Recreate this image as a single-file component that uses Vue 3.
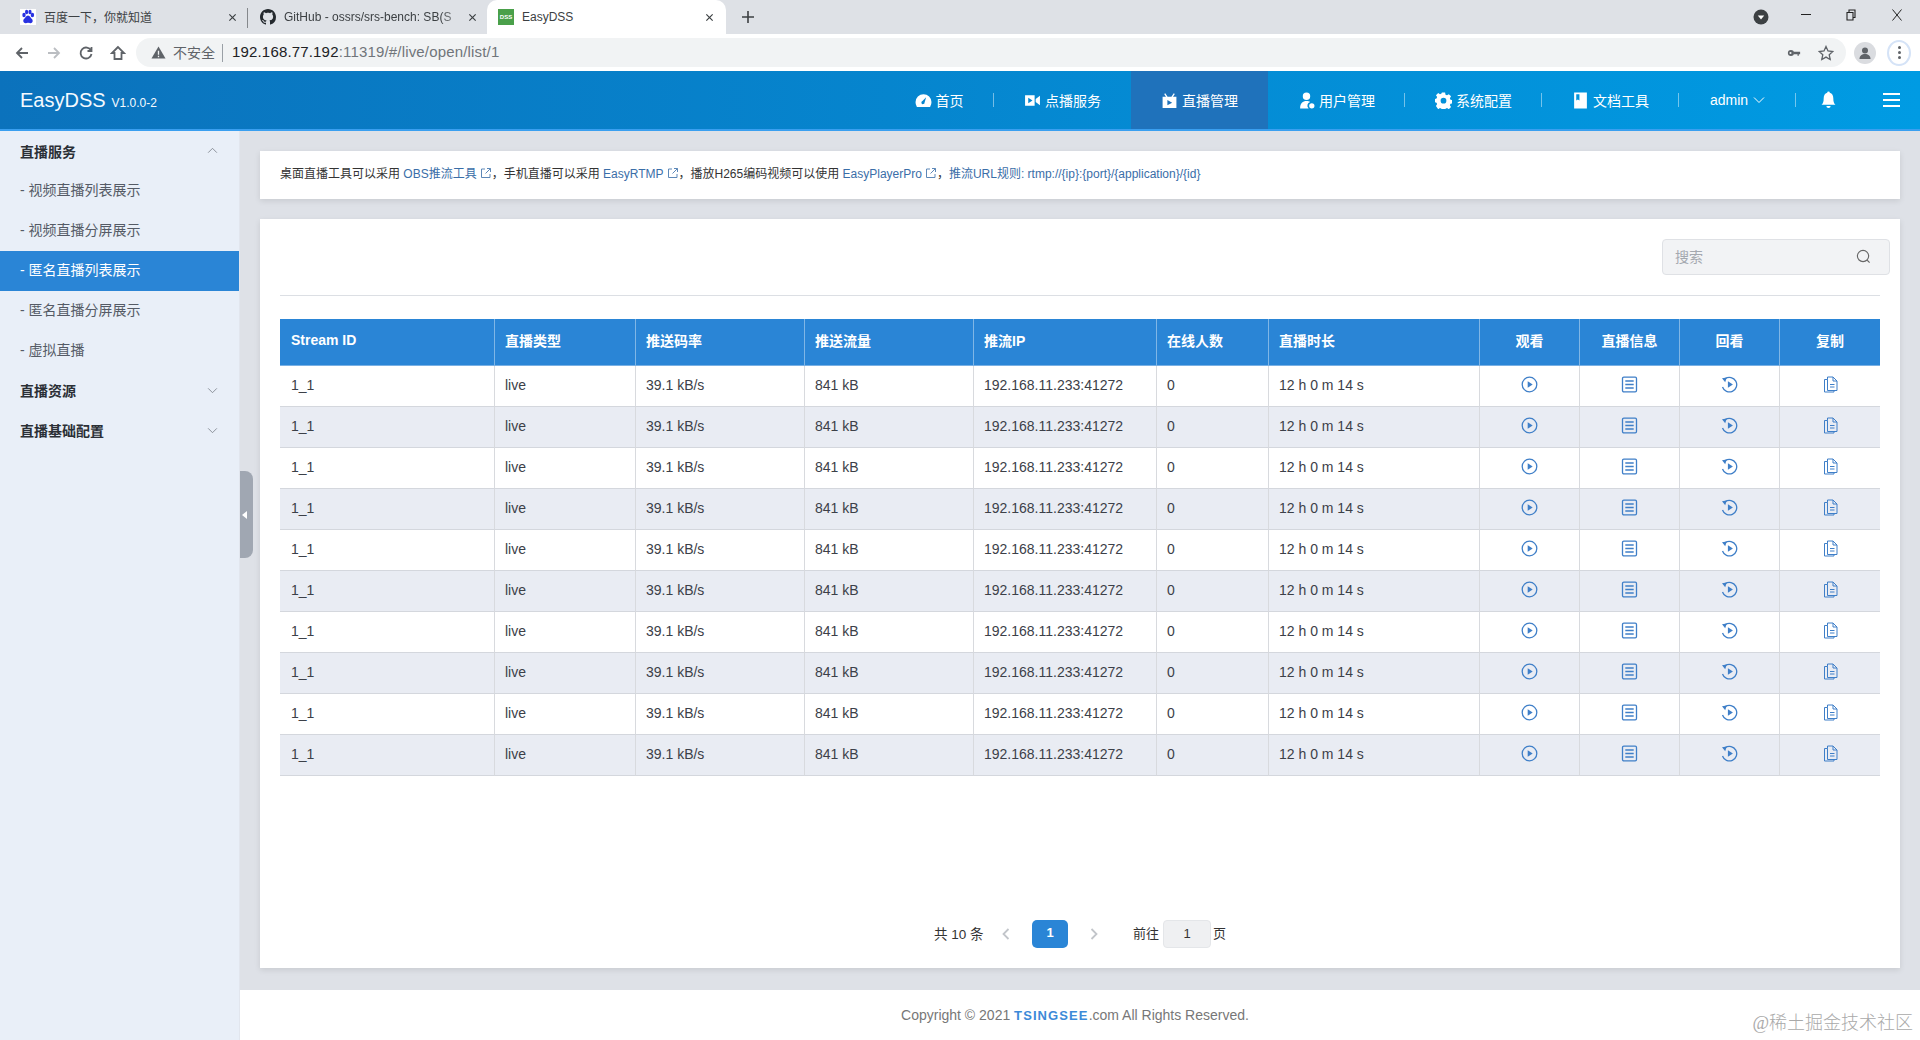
<script setup>
const navItems = [
  { label: '首页', icon: 'gauge', cls: 'first' },
  { label: '点播服务', icon: 'video' },
  { label: '直播管理', icon: 'tv', active: true },
  { label: '用户管理', icon: 'user' },
  { label: '系统配置', icon: 'gear' },
  { label: '文档工具', icon: 'book' }
]
const subs = ['视频直播列表展示', '视频直播分屏展示', '匿名直播列表展示', '匿名直播分屏展示', '虚拟直播']
const cols = [215, 141, 169, 169, 183, 112, 211, 100, 100, 100, 100]
const heads = ['Stream ID', '直播类型', '推送码率', '推送流量', '推流IP', '在线人数', '直播时长']
const actions = ['观看', '直播信息', '回看', '复制']
const rows = Array.from({ length: 10 }, (_, i) => i)
const cells = ['1_1', 'live', '39.1 kB/s', '841 kB', '192.168.11.233:41272', '0', '12 h 0 m 14 s']
</script>

<template>
  <div class="page">
    <div class="tabs">
      <div class="tab t1">
        <svg class="fav" viewBox="0 0 16 16"><rect width="16" height="16" fill="#fff"/><g fill="#2932e1"><ellipse cx="4" cy="6" rx="1.7" ry="2.2"/><ellipse cx="6.6" cy="3" rx="1.6" ry="2.2"/><ellipse cx="10" cy="3" rx="1.6" ry="2.2"/><ellipse cx="12.4" cy="6" rx="1.7" ry="2.2"/><path d="M8 6.500c-2 0-2.500 2.300-4 3.500-1.500 1.500-.5 4.500 2 4.200 1-.1 1.300-.4 2-.4s1.200.4 2.200.4c2.500.2 3.200-2.700 1.700-4.200-1.400-1.200-1.900-3.500-3.900-3.500z"/></g></svg>
        <span class="tab-text w1">百度一下，你就知道</span>
        <svg class="x" viewBox="0 0 10 10"><path d="M1.500 1.500l7 7M8.500 1.500l-7 7"/></svg>
      </div>
      <div class="tab t2">
        <svg class="fav" viewBox="0 0 16 16"><path fill="#24292e" d="M8 0C3.580 0 0 3.580 0 8c0 3.540 2.290 6.530 5.470 7.590.4.070.55-.17.55-.38 0-.19-.01-.82-.01-1.490-2.010.37-2.530-.49-2.690-.94-.09-.23-.48-.94-.82-1.130-.28-.15-.68-.52-.01-.53.630-.01 1.080.58 1.230.82.720 1.210 1.870.87 2.330.66.070-.52.280-.87.510-1.070-1.780-.2-3.640-.89-3.640-3.950 0-.87.310-1.590.820-2.150-.08-.2-.36-1.020.08-2.120 0 0 .67-.21 2.200.82.640-.18 1.320-.27 2-.27s1.360.09 2 .27c1.530-1.040 2.200-.82 2.200-.82.440 1.100.16 1.920.08 2.120.51.560.82 1.270.82 2.150 0 3.070-1.870 3.750-3.650 3.950.29.250.54.730.54 1.480 0 1.070-.01 1.930-.01 2.200 0 .210.15.460.55.380A8.010 8.010 0 0 0 16 8c0-4.420-3.580-8-8-8z"/></svg>
        <span class="tab-text w2">GitHub - ossrs/srs-bench: SB(S</span>
        <svg class="x" viewBox="0 0 10 10"><path d="M1.500 1.500l7 7M8.500 1.500l-7 7"/></svg>
      </div>
      <div class="tab t3">
        <span class="dss">DSS</span>
        <span class="tab-text w3">EasyDSS</span>
        <svg class="x" viewBox="0 0 10 10"><path d="M1.500 1.500l7 7M8.500 1.500l-7 7"/></svg>
      </div>
      <svg class="plus" viewBox="0 0 12 12"><path d="M6 0v12M0 6h12"/></svg>
      <div class="win">
        <svg class="w-ic" viewBox="0 0 16 16"><circle cx="8" cy="8" r="7.500" fill="#3c4043"/><path d="M4.800 6.500h6.400L8 10.500z" fill="#fff"/></svg>
        <span class="w-min"></span>
        <svg class="w-res" viewBox="0 0 10 12"><path d="M1 3.500h6v7.500H1zM3 3.500V1h6v7.500H7" fill="none" stroke="#222" stroke-width="1.100"/></svg>
        <svg class="w-cl" viewBox="0 0 12 12"><path d="M1.500 .5l9 11M10.500 .5l-9 11" stroke="#222" fill="none"/></svg>
      </div>
    </div>

    <div class="addr">
      <svg class="ctl" viewBox="0 0 16 16"><path d="M14 8H3M8 3L3 8l5 5" class="s-dark"/></svg>
      <svg class="ctl" viewBox="0 0 16 16"><path d="M2 8h11M8 3l5 5-5 5" class="s-light"/></svg>
      <svg class="ctl" viewBox="0 0 16 16"><path d="M13 5.500A5.500 5.500 0 1 0 13.500 9M13.500 2v4h-4" class="s-dark"/></svg>
      <svg class="ctl" viewBox="0 0 16 16"><path d="M8 2L2 8h2.500v6h7V8H14z" class="s-dark"/></svg>
      <div class="pill">
        <svg class="warn" viewBox="0 0 16 16"><path d="M8 1.500L15.500 14.500H.5z" fill="#5f6368"/><path d="M7.300 6h1.400v4.500H7.300zM7.300 11.500h1.400V13H7.300z" fill="#f1f3f4"/></svg>
        <span class="insecure">不安全</span>
        <span class="vbar"></span>
        <span class="url"><b>192.168.77.192</b>:11319/#/live/open/list/1</span>
        <svg class="key" viewBox="0 0 16 16"><circle cx="4.500" cy="8" r="3.500" fill="#5f6368"/><circle cx="4" cy="8" r="1.200" fill="#f1f3f4"/><path d="M7.500 6.500H15v3h-1.500v1.500H12V9.500H7.500z" fill="#5f6368"/></svg>
        <svg class="star" viewBox="0 0 16 16"><path d="M8 1.500l2 4.500 4.800.5-3.600 3.200 1 4.800L8 12.100l-4.200 2.400 1-4.800L1.200 6.500 6 6z" fill="none" stroke="#5f6368" stroke-width="1.300"/></svg>
      </div>
      <span class="prof"><svg viewBox="0 0 16 16"><circle cx="8" cy="5.500" r="3" fill="#5f6368"/><path d="M2.500 14c0-3.500 2.500-5 5.500-5s5.500 1.500 5.500 5z" fill="#5f6368"/></svg></span>
      <span class="dots"><i></i><i></i><i></i></span>
    </div>

    <header class="head">
      <div class="logo">EasyDSS<small>V1.0.0-2</small></div>
      <nav class="nav">
        <a v-for="n in navItems" :key="n.label" class="nav-item" :class="[n.cls, { on: n.active }]">
          <svg class="nav-ic" viewBox="0 0 16 16" fill="#fff">
            <path v-if="n.icon === 'gauge'" fill-rule="evenodd" d="M8 2a7.500 7.500 0 0 0-7.500 7.500c0 1.700.5 3 1.300 4.500h12.400c.8-1.500 1.300-2.800 1.300-4.500A7.500 7.500 0 0 0 8 2zM7 8.500L10.500 5 9 9.800a1.500 1.500 0 1 1-2-1.300z"/>
            <path v-else-if="n.icon === 'video'" fill-rule="evenodd" d="M1 3h9v10H1zM4 5.500v5L8 8zM11 6.500L15 3.500v9l-4-3z"/>
            <path v-else-if="n.icon === 'tv'" fill-rule="evenodd" d="M1.500 4.500h3.200L3 1.800l1-.6L6.200 4.500h3.600L12 1.200l1 .6-1.700 2.700h3.200V15h-13zM6 7.500v5L10.500 10z"/>
            <path v-else-if="n.icon === 'user'" fill-rule="evenodd" d="M8 .5a3.500 3.500 0 1 1 0 7 3.500 3.500 0 0 1 0-7zM2 15.500c0-5 2.500-7 6-7 1.500 0 2.500.3 3.400 1a3.500 3.500 0 0 0-1.400 6z M13 10.500a2.500 2.500 0 1 1 0 5 2.500 2.500 0 0 1 0-5z"/>
            <path v-else-if="n.icon === 'gear'" fill-rule="evenodd" d="M6.500.5h3l.4 2 1.400.6 1.700-1.100 2.100 2.100-1.100 1.700.6 1.400 2 .4v3l-2 .4-.6 1.400 1.100 1.700-2.100 2.100-1.700-1.100-1.400.6-.4 2h-3l-.4-2-1.400-.6-1.700 1.100L.9 13.100 2 11.400l-.6-1.400-2-.4v-3l2-.4L2 4.800.9 3.100 3 1l1.700 1.100 1.400-.6zM8 5.500a2.700 2.700 0 1 0 0 5.400 2.700 2.700 0 0 0 0-5.400z"/>
            <path v-else fill-rule="evenodd" d="M2 .5h12v15H2zM4 2v6l1.500-1L7 8V2z"/>
          </svg>
          <span>{{ n.label }}</span>
        </a>
        <a class="nav-item admin">
          admin
          <svg class="chev" viewBox="0 0 12 8"><path d="M1 1.500l5 5 5-5" fill="none" stroke="#fff"/></svg>
        </a>
        <a class="nav-item bell">
          <svg viewBox="0 0 14 16" fill="#fff"><path d="M7 0a1.200 1.200 0 0 1 1.200 1.300C10.500 2 11.500 4 11.500 6.500c0 3 .6 4.500 2 6H.5c1.400-1.500 2-3 2-6C2.500 4 3.500 2 5.800 1.300A1.200 1.200 0 0 1 7 0zM5 13.500h4a2 2 0 0 1-4 0z"/></svg>
        </a>
        <a class="burger"><i></i><i></i><i></i></a>
      </nav>
    </header>

    <div class="body">
      <aside class="side">
        <div class="grp first">直播服务<svg class="g-chev" viewBox="0 0 12 8"><path d="M1 6.500l5-5 5 5"/></svg></div>
        <div v-for="(s, i) in subs" :key="s" class="sub" :class="{ on: i === 2 }">- {{ s }}</div>
        <div class="grp">直播资源<svg class="g-chev" viewBox="0 0 12 8"><path d="M1 1.500l5 5 5-5"/></svg></div>
        <div class="grp">直播基础配置<svg class="g-chev" viewBox="0 0 12 8"><path d="M1 1.500l5 5 5-5"/></svg></div>
        <div class="handle"><span></span></div>
      </aside>
      <main class="main">
        <section class="card notice">
          桌面直播工具可以采用 <a>OBS推流工具</a><svg class="ext" viewBox="0 0 12 12"><path d="M5 2H1.500v8.500H10V7M7 1.500h3.500V5M10.500 1.500L5.500 6.500"/></svg>，手机直播可以采用 <a>EasyRTMP</a><svg class="ext" viewBox="0 0 12 12"><path d="M5 2H1.500v8.500H10V7M7 1.500h3.500V5M10.500 1.500L5.500 6.500"/></svg>，播放H265编码视频可以使用 <a>EasyPlayerPro</a><svg class="ext" viewBox="0 0 12 12"><path d="M5 2H1.500v8.500H10V7M7 1.500h3.500V5M10.500 1.500L5.500 6.500"/></svg>，<a>推流URL规则: rtmp://{ip}:{port}/{application}/{id}</a>
        </section>
        <section class="card panel">
          <div class="tools">
            <div class="search">
              <span>搜索</span>
              <svg viewBox="0 0 16 16"><circle cx="7.500" cy="7.500" r="6" fill="none" stroke="#666" stroke-width="1.200"/><path d="M12 12l2.500 2.500" stroke="#666" stroke-width="1.200"/></svg>
            </div>
          </div>
          <table class="tbl">
            <colgroup><col v-for="(c, i) in cols" :key="i" :style="{ width: c + 'px' }" /></colgroup>
            <thead>
              <tr>
                <th v-for="h in heads" :key="h">{{ h }}</th>
                <th v-for="a in actions" :key="a" class="c">{{ a }}</th>
              </tr>
            </thead>
            <tbody>
              <tr v-for="r in rows" :key="r">
                <td v-for="(c, i) in cells" :key="i">{{ c }}</td>
                <td class="c">
                  <svg class="ai" viewBox="0 0 17 17"><circle cx="8.500" cy="8.500" r="7.300" /><path class="fill" d="M6.700 5.300v6.400L11.700 8.500z"/></svg>
                </td>
                <td class="c">
                  <svg class="ai" viewBox="0 0 17 17"><rect x="1.500" y="1.200" width="14" height="14.600" rx="1.300"/><path d="M4.300 5h8.400M4.300 8.500h8.400M4.300 12h8.400"/></svg>
                </td>
                <td class="c">
                  <svg class="ai" viewBox="0 0 17 17"><path d="M4.300 2.600A7.300 7.300 0 1 1 1.500 11"/><path class="fill" d="M1 2.300l4.800-.8L4.200 6.300zM6.900 5.300v6.400L11.900 8.500z"/></svg>
                </td>
                <td class="c">
                  <svg class="ai thin" viewBox="0 0 17 17"><path d="M5.500 3.500V1h5.500l4 4v9.500H5.500zM11 1v4h4M8 8.500h4.500M8 11h4.500M5.500 3.500H2.500V16H12v-1.500"/></svg>
                </td>
              </tr>
            </tbody>
          </table>
          <div class="pager">
            <span class="total">共 10 条</span>
            <svg class="pg" viewBox="0 0 8 12"><path d="M6.500 1L1.500 6l5 5"/></svg>
            <span class="cur">1</span>
            <svg class="pg" viewBox="0 0 8 12"><path d="M1.500 1l5 5-5 5"/></svg>
            <span class="goto">前往</span>
            <span class="inp">1</span>
            <span class="ye">页</span>
          </div>
        </section>
        <footer class="foot">Copyright © 2021 <b class="brand">TSINGSEE</b>.com All Rights Reserved.</footer>
      </main>
    </div>
    <div class="mark">@稀土掘金技术社区</div>
  </div>
</template>

<style>
html, body { margin: 0; background: #fff; }
</style>

<style scoped>
.page { position: relative; width: 1920px; height: 1040px; overflow: hidden; display: flex; flex-direction: column; font-family: "Liberation Sans", "Noto Sans CJK SC", sans-serif; font-size: 14px; color: #333; }
.tabs { height: 34px; flex: none; display: flex; align-items: stretch; background: #dee1e6; font-size: 12px; color: #3c4043; }
.tab { display: flex; align-items: center; box-sizing: border-box; position: relative; }
.t1 { width: 247px; padding: 0 10px 0 20px; }
.t2 { width: 240px; padding: 0 10px 0 13px; }
.t2::before { content: ""; position: absolute; left: 0; top: 8px; height: 20px; width: 1px; background: #85888c; }
.t3 { width: 239px; padding: 0 12px 0 11px; background: #fff; border-radius: 10px 10px 0 0; }
.fav { width: 16px; height: 16px; flex: none; }
.dss { width: 16px; height: 16px; flex: none; background: #4aa04a; color: #fff; font-size: 6px; font-weight: 700; line-height: 16px; text-align: center; }
.tab-text { margin-left: 8px; white-space: nowrap; overflow: hidden; flex: 1; padding-bottom: 1px; }
.w2 { -webkit-mask-image: linear-gradient(90deg, #000 85%, transparent); mask-image: linear-gradient(90deg, #000 85%, transparent); }
.x { width: 9px; height: 9px; flex: none; fill: none; stroke: #3c4043; stroke-width: 1.300; }
.plus { width: 12px; height: 12px; margin: 11px 0 0 16px; fill: none; stroke: #3c4043; stroke-width: 1.600; }
.win { margin-left: auto; height: 34px; position: relative; width: 166px; }
.w-ic { position: absolute; left: -1px; top: 9px; width: 16px; height: 16px; }
.w-min { position: absolute; left: 47px; top: 14px; width: 10px; height: 1px; background: #222; }
.w-res { position: absolute; left: 92px; top: 9px; width: 10px; height: 12px; }
.w-cl { position: absolute; left: 137px; top: 9px; width: 12px; height: 12px; }
.addr { height: 37px; flex: none; display: flex; align-items: center; background: #fff; padding-left: 14px; box-sizing: border-box; }
.ctl { width: 16px; height: 16px; margin-right: 16px; flex: none; fill: none; }
.s-dark { stroke: #5f6368; stroke-width: 1.800; }
.s-light { stroke: #bbbec2; stroke-width: 1.800; }
.pill { margin-left: -6px; flex: none; width: 1710px; height: 29px; background: #f1f3f4; border-radius: 15px; display: flex; align-items: center; box-sizing: border-box; padding: 0 12px 0 15px; }
.warn { width: 15px; height: 15px; flex: none; }
.insecure { margin-left: 7px; color: #5f6368; font-size: 14px; padding-bottom: 2px; }
.vbar { width: 1px; height: 18px; background: #9aa0a6; margin: 0 9px 0 7px; }
.url { flex: 1; color: #70757a; font-size: 15px; letter-spacing: .17px; padding-bottom: 2px; }
.url b { font-weight: 400; color: #202124; }
.key { width: 14px; height: 14px; margin-right: 17px; }
.star { width: 16px; height: 16px; }
.prof { margin-left: 8px; width: 22px; height: 22px; border-radius: 50%; background: #dadce0; display: flex; align-items: center; justify-content: center; }
.prof svg { width: 16px; height: 16px; }
.dots { margin-left: 11px; width: 24px; height: 26px; border-radius: 50%; border: 2px solid #d5e3f7; box-sizing: border-box; display: flex; flex-direction: column; align-items: center; justify-content: center; gap: 2px; }
.dots i { width: 3px; height: 3px; border-radius: 50%; background: #5f6368; }
.head { height: 60px; flex: none; box-sizing: border-box; border-bottom: 2px solid #3a9ff0; background: linear-gradient(90deg, #0b72bc, #009be3); color: #fff; display: flex; align-items: stretch; justify-content: space-between; padding-left: 20px; }
.logo { font-size: 20px; line-height: 58px; color: #f4faff; white-space: nowrap; }
.logo small { font-size: 12px; margin-left: 6px; }
.nav { display: flex; align-items: stretch; margin-right: 4px; }
.nav-item { display: flex; align-items: center; justify-content: center; width: 137px; position: relative; color: #fff; box-sizing: border-box; gap: 4px; }
.nav-item::after { content: ""; position: absolute; right: 0; top: 22px; height: 14px; width: 1px; background: rgba(255, 255, 255, .45); }
.nav-item.first { width: 110px; }
.nav-item.on { background: #1f72bb; }
.nav-item.on::after { display: none; }
.nav-item:nth-child(2)::after { display: none; }
.nav-ic { width: 17px; height: 17px; flex: none; }
.admin { width: 117px; gap: 3px; }
.chev { width: 12px; height: 8px; margin-left: 2px; }
.bell { width: 64px; }
.bell::after { display: none; }
.bell svg { width: 15px; height: 18px; }
.burger { display: flex; flex-direction: column; justify-content: center; gap: 4px; padding-left: 27px; box-sizing: border-box; width: 60px; margin-left: -4px; }
.burger i { display: block; height: 2px; background: #fff; width: 17px; }
.body { flex: 1; min-height: 0; display: flex; }
.side { position: relative; flex: none; width: 240px; background: #e9eff8; box-sizing: border-box; border-right: 1px solid #e2e6ee; }
.grp { height: 40px; box-sizing: border-box; padding: 0 21px 2px 20px; display: flex; align-items: center; justify-content: space-between; font-weight: 700; color: #2b2f36; }
.grp.first { padding-bottom: 1px; }
.g-chev { width: 11px; height: 7px; fill: none; stroke: #7f858e; stroke-width: 1; }
.sub { height: 40px; line-height: 38px; padding-left: 20px; color: #555b66; }
.sub.on { background: #2a85d6; color: #fff; }
.handle { position: absolute; left: 240px; top: 340px; width: 13px; height: 87px; background: #a0a7b2; border-radius: 0 8px 8px 0; display: flex; align-items: center; justify-content: center; }
.handle span { border: 4px solid transparent; border-right: 5px solid #fff; border-left: 0; margin-right: 4px; }
.main { flex: 1; min-width: 0; background: #dee1e7; display: flex; flex-direction: column; padding-top: 20px; }
.card { background: #fff; margin: 0 20px; box-shadow: 0 2px 6px rgba(0, 0, 0, .1); }
.notice { height: 48px; flex: none; box-sizing: border-box; padding-left: 20px; line-height: 47px; font-size: 12px; color: #333; white-space: nowrap; }
.notice a { color: #3a6ea8; }
.ext { width: 12px; height: 12px; margin-left: 3px; fill: none; stroke: #5d88b8; stroke-width: 1; vertical-align: -1px; }
.panel { margin-top: 20px; height: 749px; flex: none; box-sizing: border-box; padding: 20px; display: flex; flex-direction: column; }
.tools { display: flex; justify-content: flex-end; border-bottom: 1px solid #dcdfe4; height: 56px; flex: none; margin-bottom: 23px; }
.search { width: 228px; height: 36px; box-sizing: border-box; margin-right: -10px; background: #f2f3f5; border: 1px solid #dfe1e5; border-radius: 4px; display: flex; align-items: center; justify-content: space-between; padding: 0 18px 2px 12px; color: #a4a8af; font-size: 14px; }
.search svg { width: 15px; height: 15px; margin-top: 1px; }
.tbl { width: 1600px; table-layout: fixed; border-collapse: separate; border-spacing: 0; flex: none; }
.tbl th { height: 47px; box-sizing: border-box; background: #2a85d6; color: #fff; font-weight: 700; font-size: 14px; text-align: left; padding: 0 10px 4px; border-right: 1px solid rgba(255, 255, 255, .4); border-bottom: 1px solid #79b0e4; }
.tbl td { height: 41px; box-sizing: border-box; padding: 0 10px 2px; border-right: 1px solid #d8dade; border-bottom: 1px solid #d4d7dd; color: #3c4048; white-space: nowrap; }
.tbl th:first-child, .tbl td:first-child { padding-left: 11px; }
.tbl th:last-child, .tbl td:last-child { border-right: 0; }
.tbl th.c { text-align: center; padding: 0 0 4px; }
.tbl td.c { text-align: center; padding: 0 0 3px; }
.tbl tbody tr:nth-child(even) td { background: #e9ecf3; }
.ai { width: 17px; height: 17px; display: block; margin: 0 auto; fill: none; stroke: #3f7fc8; stroke-width: 1.300; }
.ai.thin { stroke-width: 1; }
.ai .fill { fill: #3f7fc8; stroke: none; }
.pager { margin-top: auto; height: 28px; flex: none; display: flex; align-items: center; padding-left: 654px; font-size: 13px; color: #333; }
.total { width: 48px; white-space: nowrap; font-size: 13.500px; padding-bottom: 3px; }
.pg { width: 8px; height: 12px; fill: none; stroke: #c2c5ca; stroke-width: 1.800; flex: none; }
.pg:nth-of-type(1) { margin: 0 22px 0 20px; }
.cur { width: 36px; height: 28px; background: #2a85d6; color: #fff; font-weight: 700; border-radius: 5px; text-align: center; line-height: 26px; flex: none; }
.cur + .pg { margin: 0 35px 0 22px; }
.goto { width: 30px; flex: none; padding-bottom: 3px; }
.inp { width: 48px; height: 28px; box-sizing: border-box; background: #eff0f2; border: 1px solid #e4e6e9; border-radius: 4px; text-align: center; line-height: 26px; flex: none; }
.ye { margin-left: 2px; padding-bottom: 3px; }
.foot { margin-top: 22px; flex: 1; background: #fff; color: #777; font-size: 14px; display: flex; justify-content: center; align-items: center; white-space: pre; padding-right: 10px; box-sizing: border-box; }
.brand { color: #3c8ad8; font-size: 13px; font-weight: 700; letter-spacing: 1.100px; }
.mark { position: absolute; right: 7px; bottom: 5px; font-size: 18px; line-height: 24px; color: #a9a9a9; font-family: "Liberation Serif", "Noto Sans CJK SC", serif; font-weight: 300; }
</style>
